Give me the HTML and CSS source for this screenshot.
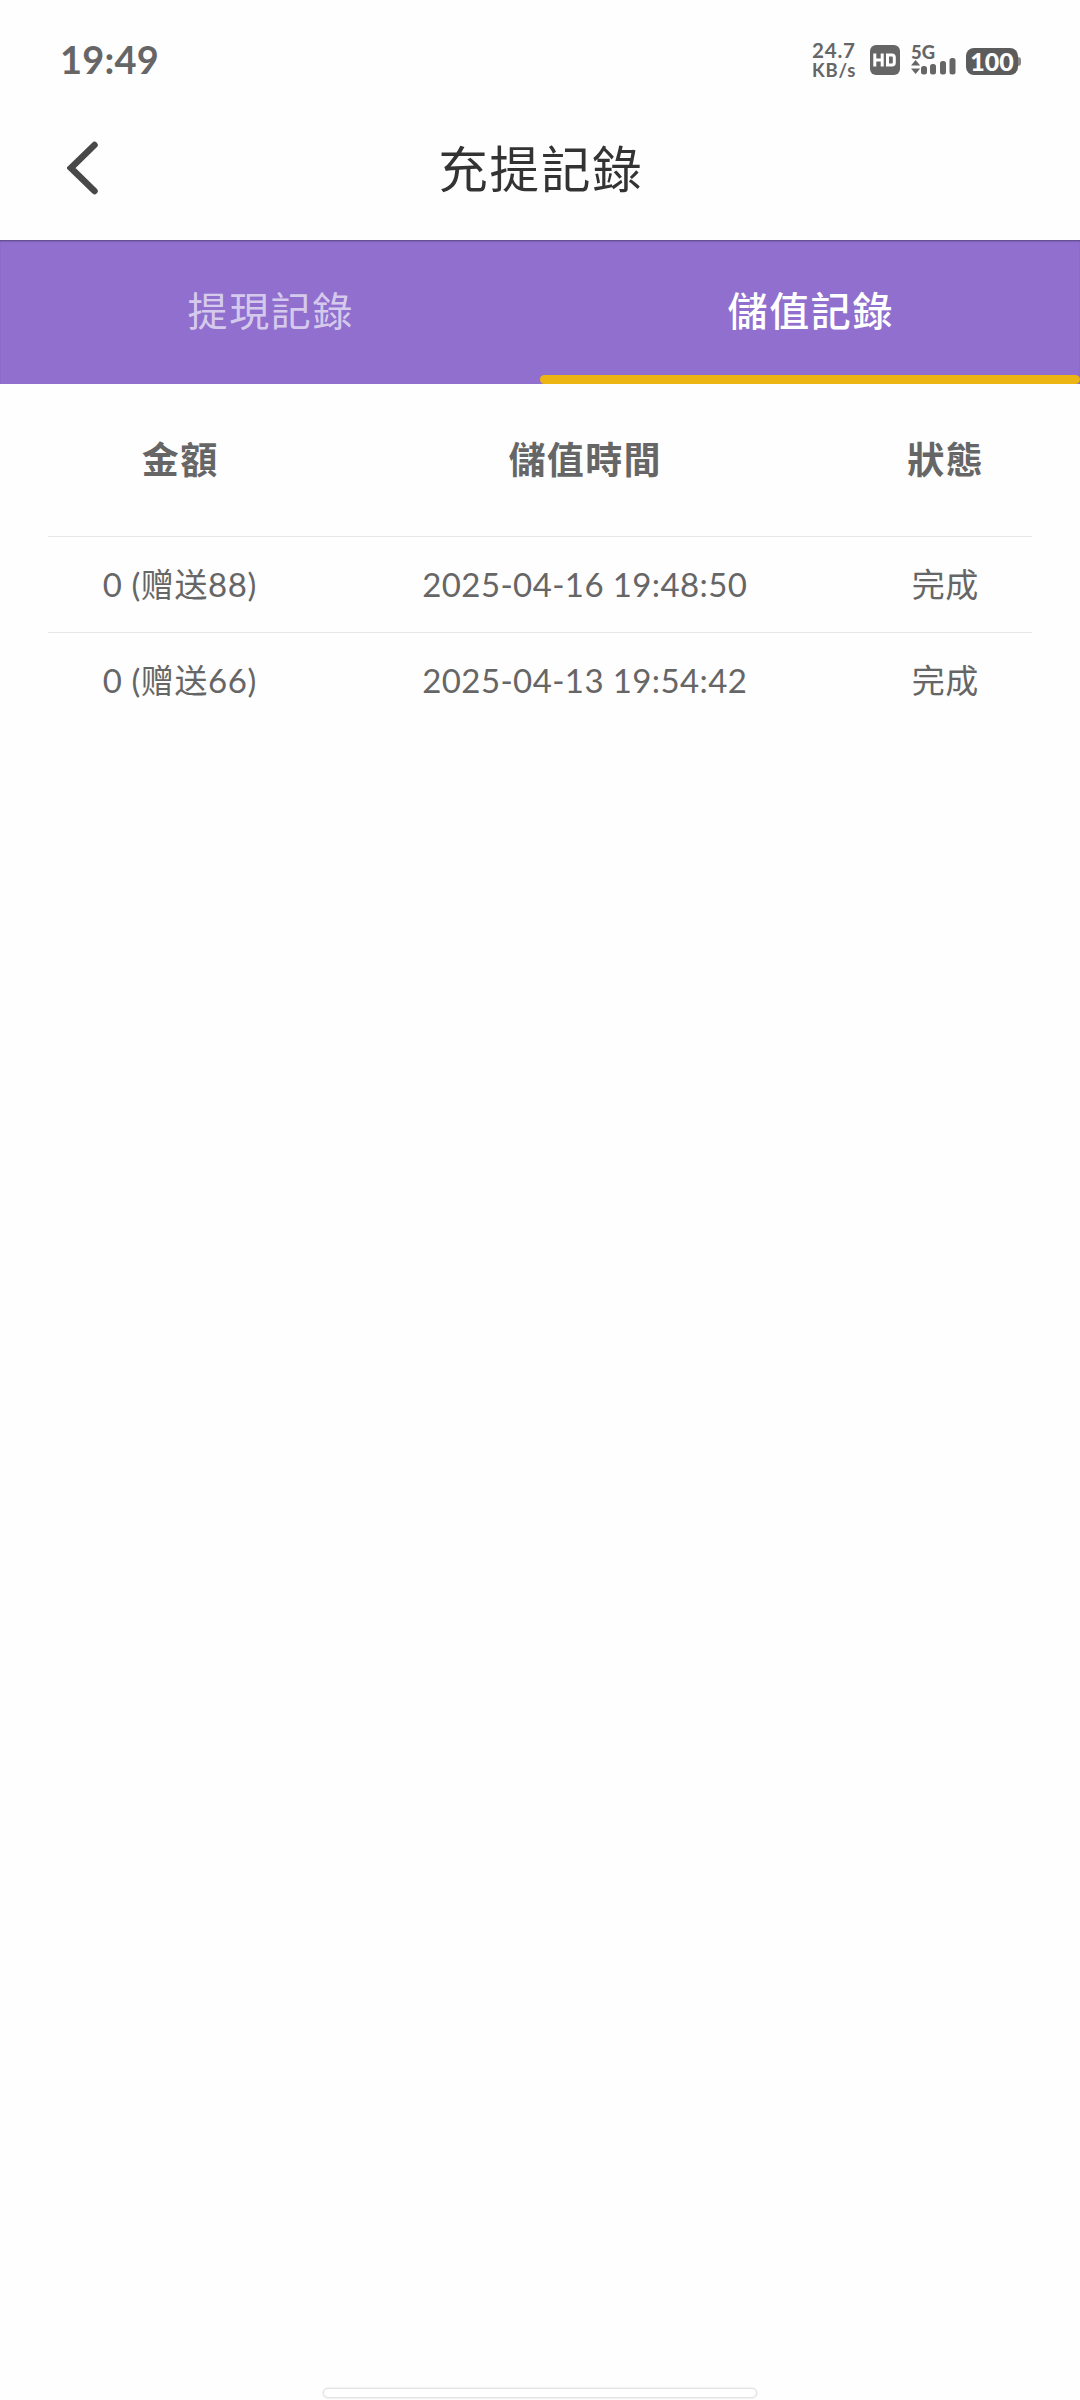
FILE: index.html
```html
<!DOCTYPE html>
<html lang="zh-Hant">
<head>
    <meta charset="UTF-8">
    <meta name="viewport" content="width=device-width, initial-scale=1.0">
    <title>充提記錄</title>
    <link rel="stylesheet" href="styles.css">
</head>
<body>
    <div class="status-bar">
        <div class="clock">19:49</div>
        <div class="status-icons">
            <div class="speed"><span>24.7</span><span class="unit">KB/s</span></div>
            <svg class="hd" width="30" height="30" viewBox="0 0 30 30">
                <rect width="30" height="30" rx="6" fill="#666"/>
                <path d="M4.800 8.500v13M12.200 8.500v13M5 15h7M17.500 10v10h4.500q2.300 0 2.300-2.300v-5.400q0-2.300-2.300-2.300z" fill="none" stroke="#fff" stroke-width="3"/>
            </svg>
            <svg class="signal" width="46" height="36" viewBox="0 0 46 36">
                <text x="0" y="18.500" textLength="24" lengthAdjust="spacingAndGlyphs">5G</text>
                <path d="M0 25.500l4.600-5.500 4.600 5.500zM0 28.500h9.200L4.600 34z"/>
                <rect x="10" y="26" width="6" height="8.500" rx="2.500"/>
                <rect x="19" y="24" width="6" height="10.500" rx="2.500"/>
                <rect x="29" y="21" width="6" height="13.500" rx="2.500"/>
                <rect x="38.500" y="18" width="6" height="16.500" rx="2.500"/>
            </svg>
            <div class="battery">100</div>
        </div>
    </div>

    <div class="header">
        <svg class="back" width="32" height="54" viewBox="0 0 32 54">
            <path d="M27.500 4L4 27l23.500 23" fill="none" stroke="#484848" stroke-width="6.500" stroke-linecap="round"/>
        </svg>
        <h1>充提記錄</h1>
    </div>

    <div class="tabs">
        <div class="tab">提現記錄</div>
        <div class="tab active">儲值記錄</div>
    </div>

    <table>
        <thead>
            <tr>
                <th class="amount">金額</th>
                <th class="time">儲值時間</th>
                <th class="state">狀態</th>
            </tr>
        </thead>
        <tbody>
            <tr>
                <td>0 (<span lang="zh-Hans">赠送</span>88)</td>
                <td class="date">2025-04-16 19:48:50</td>
                <td>完成</td>
            </tr>
            <tr>
                <td>0 (<span lang="zh-Hans">赠送</span>66)</td>
                <td class="date">2025-04-13 19:54:42</td>
                <td>完成</td>
            </tr>
        </tbody>
    </table>

    <div class="home-bar"></div>
</body>
</html>
```
FILE: styles.css
```css
* {
    box-sizing: border-box;
}

body {
    display: flex;
    flex-direction: column;
    height: 2400px;
    margin: 0;
    background-color: #fefefe;
    color: #666;
    font-family: Lato, "Noto Sans CJK TC", sans-serif;
    overflow: hidden;
}

[lang="zh-Hans"] {
    font-family: "Noto Sans CJK SC", sans-serif;
}

.status-bar {
    display: flex;
    justify-content: space-between;
    height: 120px;
    padding: 0 60px;
}

.clock {
    margin-top: 35px;
    font-size: 38px;
    font-weight: bold;
    line-height: 48px;
    letter-spacing: 0.2px;
}

.status-icons {
    display: flex;
    align-items: flex-start;
}

.speed {
    display: flex;
    flex-direction: column;
    width: 58px;
    margin-top: 40px;
    font-size: 20.5px;
    font-weight: bold;
    line-height: 20px;
    letter-spacing: 0.8px;
}

.unit {
    font-size: 18.5px;
}

.hd {
    margin-top: 45px;
}

.signal {
    margin: 40px 0 0 11px;
    fill: #666;
    font-size: 19px;
    font-weight: 900;
}

.battery {
    position: relative;
    width: 52px;
    height: 27px;
    margin: 48px 2px 0 9px;
    border-radius: 8px;
    background-color: #5c5c5c;
    color: #fff;
    font-size: 25px;
    font-weight: 900;
    line-height: 27px;
    text-align: center;
}

.battery::after {
    content: "";
    position: absolute;
    top: 9px;
    right: -3px;
    width: 3px;
    height: 9px;
    border-radius: 0 3px 3px 0;
    background-color: #888;
}

.header {
    display: grid;
    grid-template-columns: 100px 1fr 100px;
    align-items: center;
    height: 120px;
}

.back {
    margin: -24px 0 0 67px;
}

h1 {
    margin: -28px 0 0;
    color: #333;
    font-size: 49.5px;
    font-weight: normal;
    letter-spacing: 1.8px;
    text-indent: 1.8px;
    text-align: center;
}

.tabs {
    display: flex;
    height: 144px;
    background-color: #906fce;
    box-shadow: inset 0 2px 2px -1px rgba(0,0,0,0.4);
}

.tab {
    display: flex;
    flex-direction: column;
    justify-content: space-between;
    flex: 1;
    padding-top: 11px;
    color: rgba(255,255,255,0.65);
    font-size: 40px;
    line-height: 120px;
    letter-spacing: 1.6px;
    text-indent: 1.6px;
    text-align: center;
}

.active {
    color: #fff;
    font-weight: 500;
}

.active::after {
    content: "";
    height: 9px;
    border-radius: 5px;
    background-color: #ecb514;
}

table {
    width: 984px;
    margin: 0 auto;
    border-collapse: collapse;
    table-layout: fixed;
}

.amount {
    width: 263px;
}

.state {
    width: 174px;
}

th {
    height: 152px;
    padding: 0 0 4px;
    font-size: 37px;
    letter-spacing: 1.4px;
    text-indent: 1.4px;
}

td {
    height: 96px;
    padding: 0 0 2px;
    border-top: 1px solid #e6e6e6;
    font-size: 33px;
    letter-spacing: 0.6px;
    text-indent: 0.6px;
    text-align: center;
    white-space: nowrap;
}

.date {
    padding: 0;
    letter-spacing: 0.4px;
}

.home-bar {
    width: 434px;
    height: 10px;
    margin: auto auto 2px;
    border: 1px solid #e2e2e2;
    border-radius: 5px;
    background-color: #fff;
    box-shadow: 0 0 2px rgba(0,0,0,0.15);
}
```
